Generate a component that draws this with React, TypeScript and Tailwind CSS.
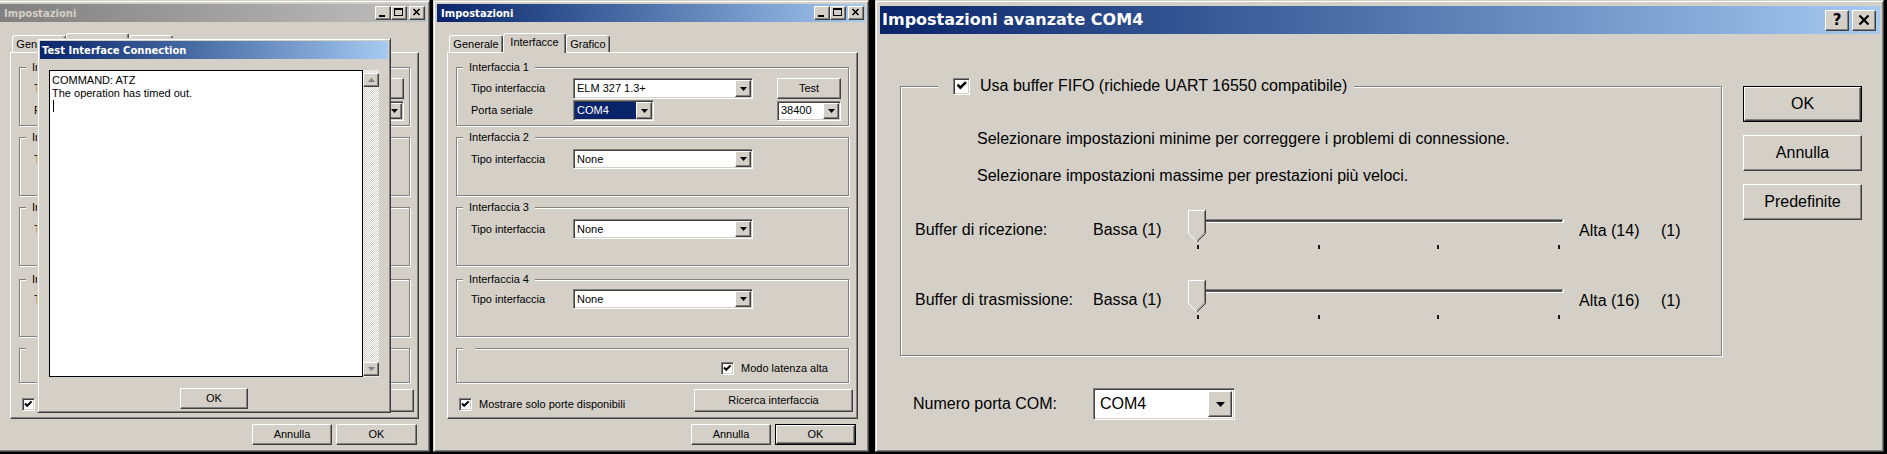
import React from "react";

const sans = "font-['Liberation_Sans',Arial,sans-serif]";
const titleFont = "font-['DejaVu_Sans',Verdana,sans-serif] font-bold";
const face = "bg-[#d4d0c8]";
const raised =
  "border border-t-white border-l-white border-r-[#404040] border-b-[#404040] shadow-[inset_-1px_-1px_#808080]";
const sunken =
  "border border-t-[#808080] border-l-[#808080] border-r-white border-b-white shadow-[inset_1px_1px_#404040,inset_-1px_-1px_#d4d0c8]";
const etched = "border border-[#808080] shadow-[inset_1px_1px_#fff,1px_1px_#fff]";
const frame =
  "border border-t-[#d4d0c8] border-l-[#d4d0c8] border-r-[#404040] border-b-[#404040] shadow-[inset_1px_1px_#fff,inset_-1px_-1px_#808080] bg-[#d4d0c8]";
const activeBar = "bg-linear-to-r from-[#0a246a] to-[#a6caf0]";
const inactiveBar = "bg-linear-to-r from-[#808080] to-[#c0c0c0]";

function Btn({
  children,
  className = "",
  isDefault = false,
}: {
  children: React.ReactNode;
  className?: string;
  isDefault?: boolean;
}) {
  if (isDefault) {
    return (
      <div className={`flex border border-black ${className}`}>
        <div className={`flex flex-1 items-center justify-center ${raised} ${face}`}>{children}</div>
      </div>
    );
  }
  return <div className={`flex items-center justify-center ${raised} ${face} ${className}`}>{children}</div>;
}

function Arrow({ big = false, color = "#000" }: { big?: boolean; color?: string }) {
  return big ? (
    <svg width="9" height="5" viewBox="0 0 9 5">
      <path d="M0 0H9L4.5 5Z" fill={color} />
    </svg>
  ) : (
    <svg width="7" height="4" viewBox="0 0 7 4">
      <path d="M0 0H7L3.5 4Z" fill={color} />
    </svg>
  );
}

function Combo({
  value,
  className = "",
  selected = false,
  big = false,
}: {
  value: string;
  className?: string;
  selected?: boolean;
  big?: boolean;
}) {
  return (
    <div className={`flex bg-white ${sunken} ${big ? "p-[2px]" : "p-[1px]"} ${className}`}>
      <div
        className={`flex flex-1 items-center ${big ? "pl-[4px]" : "pl-[2px]"} ${
          selected ? "bg-[#0a246a] text-white" : ""
        }`}
      >
        {value}
      </div>
      <div className={`flex items-center justify-center ${raised} ${face} ${big ? "w-[24px]" : "w-[16px]"}`}>
        <Arrow big={big} />
      </div>
    </div>
  );
}

function Check({ big = false }: { big?: boolean }) {
  return (
    <div
      className={`flex shrink-0 items-center justify-center bg-white ${sunken} ${
        big ? "h-[17px] w-[17px]" : "h-[13px] w-[13px]"
      }`}
    >
      <svg viewBox="0 0 11 11" className={big ? "h-[14px] w-[14px]" : "h-[11px] w-[11px]"}>
        <path d="M2 4.5L4.2 6.8L8.6 2.4" stroke="#000" strokeWidth="2" fill="none" />
      </svg>
    </div>
  );
}

function TitleBtn({ kind }: { kind: "min" | "max" | "close" }) {
  return (
    <div className={`flex h-[14px] w-[16px] items-center justify-center ${raised} ${face}`}>
      <svg width="14" height="12" viewBox="0 0 14 12">
        {kind === "min" && <rect x="3" y="8" width="6" height="2" fill="#000" />}
        {kind === "max" && (
          <>
            <rect x="2.5" y="1.5" width="8" height="7" stroke="#000" fill="none" />
            <rect x="2" y="1" width="9" height="2" fill="#000" />
          </>
        )}
        {kind === "close" && <path d="M3.5 2L9.5 8M9.5 2L3.5 8" stroke="#000" strokeWidth="1.6" />}
      </svg>
    </div>
  );
}

function Group({
  legend,
  className = "",
  children,
}: {
  legend?: string;
  className?: string;
  children?: React.ReactNode;
}) {
  return (
    <div className={`relative ${etched} ${className}`}>
      <span className={`absolute -top-[7px] left-[6px] h-[13px] px-[6px] leading-[13px] ${face}`}>{legend}</span>
      {children}
    </div>
  );
}

function Tab({ label, w, selected = false }: { label: string; w: string; selected?: boolean }) {
  return (
    <div
      className={`${w} ${selected ? "h-[20px]" : "mb-[1px] h-[17px]"} ${face} flex justify-center rounded-t-[3px] border border-b-0 border-t-white border-l-white border-r-[#404040] pt-[2px] shadow-[inset_-1px_0_#808080]`}
    >
      {label}
    </div>
  );
}

function TypeRow({ className = "" }: { className?: string }) {
  return (
    <div className={`flex h-[20px] items-center ${className}`}>
      <span className="w-[102px]">Tipo interfaccia</span>
      <Combo value="None" className="h-[20px] w-[180px]" />
    </div>
  );
}

function Settings({ w, active, defaultOk }: { w: string; active: boolean; defaultOk: boolean }) {
  return (
    <div className={`${w} flex h-[452px] flex-col p-[3px] ${frame} ${sans} text-[11px] leading-[13px] text-black`}>
      <div className={`flex h-[18px] items-center pl-[4px] ${active ? activeBar : inactiveBar}`}>
        <span className={`${titleFont} text-[10px] ${active ? "text-white" : "text-[#d4d0c8]"}`}>Impostazioni</span>
        <div className="ml-auto mr-[1px] flex">
          <TitleBtn kind="min" />
          <TitleBtn kind="max" />
          <div className="ml-[2px]">
            <TitleBtn kind="close" />
          </div>
        </div>
      </div>

      <div className="ml-[10px] mr-[7px] mt-[11px] flex flex-col">
        <div className="relative z-10 -mb-[1px] flex h-[20px] items-end pl-[2px]">
          <Tab label="Generale" w="w-[54px]" />
          <Tab label="Interfacce" w="w-[63px]" selected />
          <Tab label="Grafico" w="w-[44px]" />
        </div>
        <div className={`flex h-[367px] flex-col px-[8px] pt-[14px] ${raised} ${face}`}>
          <Group legend="Interfaccia 1" className="h-[59px] pl-[14px] pt-[10px]">
            <div className="flex h-[21px] items-center">
              <span className="w-[102px]">Tipo interfaccia</span>
              <Combo value="ELM 327 1.3+" className="h-[21px] w-[180px]" />
              <Btn className="ml-[24px] h-[21px] w-[64px]">Test</Btn>
            </div>
            <div className="mt-[1px] flex h-[21px] items-center">
              <span className="w-[102px]">Porta seriale</span>
              <Combo value="COM4" selected className="h-[21px] w-[81px]" />
              <Combo value="38400" className="ml-[123px] h-[20px] w-[64px]" />
            </div>
          </Group>
          <Group legend="Interfaccia 2" className="mt-[11px] h-[59px] pl-[14px] pt-[11px]">
            <TypeRow />
          </Group>
          <Group legend="Interfaccia 3" className="mt-[11px] h-[59px] pl-[14px] pt-[11px]">
            <TypeRow />
          </Group>
          <Group legend="Interfaccia 4" className="mt-[13px] h-[58px] pl-[14px] pt-[9px]">
            <TypeRow />
          </Group>
          <Group legend="" className="mt-[11px] h-[35px] pl-[264px] pt-[13px]">
            <div className="flex items-center gap-[7px]">
              <Check />
              <span>Modo latenza alta</span>
            </div>
          </Group>
          <div className="-mr-[4px] ml-[3px] mt-[6px] flex items-start justify-between">
            <div className="mt-[9px] flex items-center gap-[7px]">
              <Check />
              <span>Mostrare solo porte disponibili</span>
            </div>
            <Btn className="h-[23px] w-[159px]">Ricerca interfaccia</Btn>
          </div>
        </div>
      </div>

      <div className="mr-[9px] mt-[5px] flex justify-end gap-[4px]">
        <Btn className="h-[21px] w-[80px]">Annulla</Btn>
        <Btn isDefault={defaultOk} className="h-[21px] w-[81px]">
          OK
        </Btn>
      </div>
    </div>
  );
}

function ScrollBtn({ up }: { up: boolean }) {
  return (
    <div className={`flex h-[14px] w-[16px] items-center justify-center ${raised} ${face}`}>
      <svg width="7" height="4" viewBox="0 0 7 4">
        <path d={up ? "M0 4H7L3.5 0Z" : "M0 0H7L3.5 4Z"} fill="#808080" />
      </svg>
    </div>
  );
}

function TestDialog() {
  return (
    <div
      className={`absolute left-[37px] top-[38px] z-20 flex h-[375px] w-[354px] flex-col p-[2px] ${frame} ${sans} text-[11px] leading-[13px]`}
    >
      <div className={`flex h-[18px] items-center pl-[2px] ${activeBar}`}>
        <span className={`${titleFont} text-[10px] text-white`}>Test Interface Connection</span>
      </div>
      <div className="ml-[9px] mt-[11px] flex h-[307px] w-[330px]">
        <div className="flex-1 border border-black bg-white px-[2px] pt-[3px]">
          <div>COMMAND: ATZ</div>
          <div>The operation has timed out.</div>
          <div className="ml-[1px] h-[12px] w-px bg-black" />
        </div>
        <div className="flex w-[16px] flex-col justify-between pb-px pt-[3px] [background-image:repeating-conic-gradient(#fff_0_25%,#d4d0c8_0_50%)] [background-size:2px_2px]">
          <ScrollBtn up />
          <ScrollBtn up={false} />
        </div>
      </div>
      <div className="mt-[11px] flex justify-center">
        <Btn className="h-[21px] w-[68px]">OK</Btn>
      </div>
    </div>
  );
}

function Slider() {
  return (
    <svg width="376" height="40" viewBox="0 0 376 40" className="shrink-0">
      <line x1="2" y1="9.5" x2="375" y2="9.5" stroke="#808080" />
      <line x1="3" y1="10.5" x2="374" y2="10.5" stroke="#404040" />
      <line x1="3" y1="11.5" x2="374" y2="11.5" stroke="#5a5a5a" />
      <line x1="2" y1="12.5" x2="376" y2="12.5" stroke="#fff" />
      <line x1="375.5" y1="9" x2="375.5" y2="13" stroke="#fff" />
      {[9, 130, 249, 370].map((x) => (
        <rect key={x} x={x} y="35" width="2" height="4" fill="#1a1a1a" />
      ))}
      <path d="M0.5 0.5H17.5V23.5L9 32L0.5 23.5Z" fill="#d4d0c8" />
      <path d="M0.5 23.5V0.5H17" stroke="#fff" fill="none" />
      <path d="M0.5 23.5L8.5 31.5" stroke="#fff" fill="none" />
      <path d="M17.5 0V23.5L9 32" stroke="#404040" fill="none" />
      <path d="M16.5 1V23L9 30.5" stroke="#808080" fill="none" />
    </svg>
  );
}

function SliderRow({ label, max, className }: { label: string; max: string; className: string }) {
  return (
    <div className={`ml-[14px] flex items-start leading-[19px] ${className}`}>
      <span className="mt-[10px] w-[178px]">{label}</span>
      <span className="mt-[10px] w-[95px]">Bassa (1)</span>
      <Slider />
      <span className="ml-[15px] mt-[11px] w-[82px]">{max}</span>
      <span className="mt-[11px]">(1)</span>
    </div>
  );
}

function Advanced() {
  return (
    <div
      className={`flex h-[452px] w-[1009px] shrink-0 flex-col pl-[4px] pr-[3px] pt-[5px] ${frame} ${sans} text-[16px] text-black`}
    >
      <div className={`flex h-[28px] items-center pl-[2px] pr-[4px] ${activeBar}`}>
        <span className={`${titleFont} text-[16px] text-white`}>Impostazioni avanzate COM4</span>
        <div className="ml-auto flex gap-[3px]">
          <div className={`flex h-[21px] w-[24px] items-center justify-center ${raised} ${face}`}>
            <span className={`${titleFont} text-[15px] leading-none`}>?</span>
          </div>
          <div className={`flex h-[21px] w-[24px] items-center justify-center ${raised} ${face}`}>
            <svg width="12" height="10" viewBox="0 0 12 10">
              <path d="M1.5 0.5L10.5 9.5M10.5 0.5L1.5 9.5" stroke="#000" strokeWidth="2.2" />
            </svg>
          </div>
        </div>
      </div>

      <div className="ml-[20px] mt-[52px] flex items-start">
        <div className="flex w-[822px] flex-col">
          <div className={`relative flex h-[270px] flex-col ${etched}`}>
            <div className={`absolute -top-[11px] left-[37px] flex h-[20px] items-center pl-[15px] pr-[7px] ${face}`}>
              <Check big />
              <span className="ml-[10px]">Usa buffer FIFO (richiede UART 16550 compatibile)</span>
            </div>
            <p className="ml-[76px] mt-[42px] leading-[19px]">
              Selezionare impostazioni minime per correggere i problemi di connessione.
            </p>
            <p className="ml-[76px] mt-[18px] leading-[19px]">
              Selezionare impostazioni massime per prestazioni più veloci.
            </p>
            <SliderRow label="Buffer di ricezione:" max="Alta (14)" className="mt-[25px]" />
            <SliderRow label="Buffer di trasmissione:" max="Alta (16)" className="mt-[30px]" />
          </div>
          <div className="mt-[32px] flex items-center pl-[13px]">
            <span className="w-[180px]">Numero porta COM:</span>
            <Combo big value="COM4" className="h-[32px] w-[142px]" />
          </div>
        </div>

        <div className="ml-[21px] flex w-[119px] flex-col gap-[13px]">
          <Btn isDefault className="h-[36px] w-[119px]">
            OK
          </Btn>
          <Btn className="h-[36px] w-[119px]">Annulla</Btn>
          <Btn className="h-[36px] w-[119px]">Predefinite</Btn>
        </div>
      </div>
    </div>
  );
}

export default function App() {
  return (
    <div className="flex h-[454px] w-[1887px] overflow-hidden bg-black">
      <div className="relative h-[452px] w-[430px] shrink-0 overflow-hidden">
        <div className="-ml-[4px]">
          <Settings w="w-[434px]" active={false} defaultOk={false} />
        </div>
        <TestDialog />
      </div>
      <div className="ml-[3px] shrink-0">
        <Settings w="w-[436px]" active defaultOk />
      </div>
      <div className="ml-[6px]">
        <Advanced />
      </div>
    </div>
  );
}
